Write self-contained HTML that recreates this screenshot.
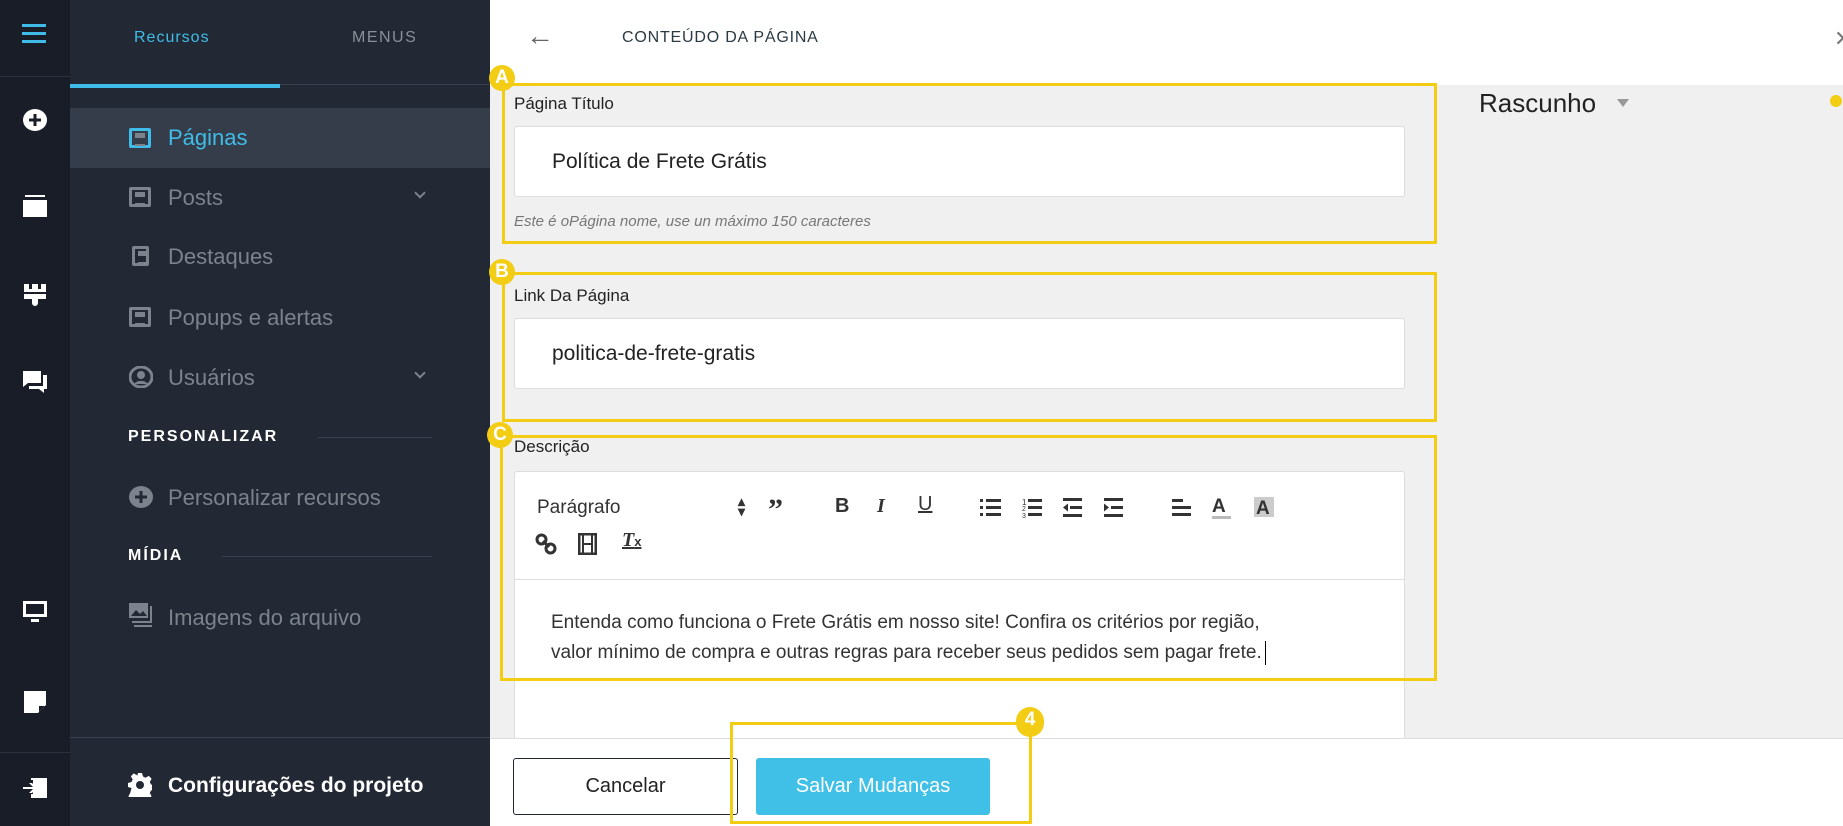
<!DOCTYPE html>
<html><head><meta charset="utf-8">
<style>
*{box-sizing:border-box;margin:0;padding:0}
body{width:1843px;height:826px;overflow:hidden;position:relative;font-family:"Liberation Sans",sans-serif;background:#f0f0f0}
.a{position:absolute}
.rail{left:0;top:0;width:70px;height:826px;background:#181d28}
.side{left:70px;top:0;width:420px;height:826px;background:#222834}
.it{position:absolute;left:168px;font-size:22px;color:#7d838c;line-height:26px}
.ic{position:absolute;left:129px;width:22px;height:20px;border:3px solid #7d838c;border-radius:2px}
.ic:after{content:"";position:absolute;left:3px;top:2px;width:10px;height:9px;border-top:2px solid #7d838c;border-bottom:2px solid #7d838c;box-shadow:inset 0 3px 0 0 #7d838c}
.ri{position:absolute;left:23px;fill:#fff}
.ybox{position:absolute;border:3px solid #f2cd14}
.badge{position:absolute;width:26px;height:26px;border-radius:50%;background:#f2cd14;color:#fff;font-weight:bold;font-size:19px;text-align:center;line-height:26px}
.lbl{position:absolute;left:514px;font-size:17px;color:#222}
.inp{position:absolute;left:514px;width:891px;background:#fff;border:1px solid #ddd;border-radius:3px;font-size:21px;color:#222;padding-left:37px}
.tb{position:absolute;font-size:20px;color:#333;font-weight:bold}
</style></head><body>
<div class="a rail"></div>
<div class="a" style="left:0;top:76px;width:70px;height:1px;background:#2c3240"></div>
<div class="a" style="left:0;top:752px;width:70px;height:1px;background:#2c3240"></div>
<div class="a" style="left:22px;top:24px;width:24px;height:3px;background:#3fbde8;box-shadow:0 8px 0 #3fbde8,0 16px 0 #3fbde8"></div>
<svg class="ri" style="top:108px" width="24" height="24" viewBox="0 0 24 24"><ellipse cx="12" cy="12" rx="12" ry="11"/><path d="M12 6v12M6 12h12" stroke="#181d28" stroke-width="3"/></svg>
<svg class="ri" style="top:195px" width="24" height="24" viewBox="0 0 24 24"><rect x="2" y="0" width="20" height="2"/><rect x="0" y="5" width="24" height="17"/></svg>
<svg class="ri" style="top:284px" width="24" height="24" viewBox="0 0 24 24"><path d="M1 0h5v5h3V0h6v5h3V0h5v8H1zM1 10h22v5h-8v4a3 3 0 0 1-6 0v-4H1z"/></svg>
<svg class="ri" style="top:370px" width="24" height="24" viewBox="0 0 24 24"><path d="M0 1h18v12H5l-5 4z M20 5h4v14h-3v4l-5-4H6v-3h14z"/></svg>
<svg class="ri" style="top:600px" width="24" height="24" viewBox="0 0 24 24"><path d="M0 1h24v16H0z M3 4v10h18V4z M8 19h8v3H8z"/></svg>
<svg class="ri" style="top:690px" width="24" height="24" viewBox="0 0 24 24"><path d="M1 1h22v14l-8 8H1z" /><path d="M16 22l6-6h-6z" fill="#181d28"/></svg>
<svg class="ri" style="top:776px" width="24" height="24" viewBox="0 0 24 24"><path d="M8 2h16v20H8v-4h2v-14h-2z M0 11h10l-4-4h3l5 5-5 5H6l4-4H0z"/></svg>

<div class="a side"></div>
<div class="a" style="left:70px;top:84px;width:420px;height:1px;background:#394050"></div>
<div class="a" style="left:70px;top:84px;width:210px;height:4px;background:#3fbde8"></div>
<div class="a" style="left:134px;top:29px;font-size:16px;color:#3fbde8;letter-spacing:1px">Recursos</div>
<div class="a" style="left:352px;top:29px;font-size:16px;color:#8a9099;letter-spacing:1.5px">MENUS</div>
<div class="a" style="left:70px;top:108px;width:420px;height:60px;background:#363d4a"></div>
<div class="ic" style="top:128px;border-color:#3fbde8"></div>
<div class="it" style="top:125px;color:#3fbde8">Páginas</div>
<div class="ic" style="top:187px"></div><div class="it" style="top:185px">Posts</div>
<div class="a" style="left:416px;top:189px;width:8px;height:8px;border-right:2px solid #7d838c;border-bottom:2px solid #7d838c;transform:rotate(45deg)"></div>
<div class="ic" style="top:246px;left:132px;width:17px"></div><div class="it" style="top:244px">Destaques</div>
<div class="ic" style="top:307px"></div><div class="it" style="top:305px">Popups e alertas</div>
<svg class="a" style="left:129px;top:366px" width="24" height="22" viewBox="0 0 24 22"><ellipse cx="12" cy="11" rx="11" ry="10" fill="none" stroke="#7d838c" stroke-width="3"/><circle cx="12" cy="9" r="4" fill="#7d838c"/><path d="M5 18a8 6 0 0 1 14 0z" fill="#7d838c"/></svg>
<div class="it" style="top:365px">Usuários</div>
<div class="a" style="left:416px;top:369px;width:8px;height:8px;border-right:2px solid #7d838c;border-bottom:2px solid #7d838c;transform:rotate(45deg)"></div>
<div class="a" style="left:128px;top:428px;font-size:16px;font-weight:bold;color:#fff;letter-spacing:2px">PERSONALIZAR</div>
<div class="a" style="left:318px;top:437px;width:114px;height:1px;background:#394050"></div>
<svg class="a" style="left:129px;top:486px" width="24" height="22" viewBox="0 0 24 22"><ellipse cx="12" cy="11" rx="12" ry="11" fill="#7d838c"/><path d="M12 5v12M6 11h12" stroke="#222834" stroke-width="3"/></svg>
<div class="it" style="top:485px">Personalizar recursos</div>
<div class="a" style="left:128px;top:547px;font-size:16px;font-weight:bold;color:#fff;letter-spacing:2px">MÍDIA</div>
<div class="a" style="left:222px;top:556px;width:210px;height:1px;background:#394050"></div>
<svg class="a" style="left:129px;top:603px" width="24" height="24" viewBox="0 0 24 24"><rect x="0" y="0" width="19" height="15" fill="#7d838c"/><path d="M2 13l5-6 4 4 3-3 4 5z" fill="#222834"/><path d="M21 3v15H3v2h20V3z M23 5v17H5v2h18" fill="#7d838c"/></svg>
<div class="it" style="top:605px">Imagens do arquivo</div>
<div class="a" style="left:70px;top:737px;width:420px;height:1px;background:#394050"></div>
<svg class="a" style="left:128px;top:773px" width="24" height="24" viewBox="0 0 24 24"><path fill="#fff" d="M10 0h4l1 3.5 2.5 1.2 3.3-1.8 2.8 2.8-1.8 3.3 1.2 2.5 3.5 1v4l-3.5 1-1.2 2.5 1.8 3.3-2.8 2.8-3.3-1.8-2.5 1.2-1 3.5h-4l-1-3.5-2.5-1.2-3.3 1.8-2.8-2.8 1.8-3.3L3.5 15 0 14v-4l3.5-1 1.2-2.5-1.8-3.3 2.8-2.8 3.3 1.8L9 3.5z"/><circle cx="12" cy="12" r="4" fill="#222834"/></svg>
<div class="it" style="top:773px;color:#fff;font-weight:bold;font-size:21px">Configurações do projeto</div>

<div class="a" style="left:490px;top:0;width:1353px;height:85px;background:#fff"></div>
<div class="a" style="left:526px;top:20px;font-size:28px;color:#666">←</div>
<div class="a" style="left:622px;top:29px;font-size:16px;color:#2a3a44;letter-spacing:.8px">CONTEÚDO DA PÁGINA</div>
<div class="a" style="left:622px;top:83px;width:250px;height:3px;background:#2a2f3a"></div>
<div class="a" style="left:1834px;top:26px;font-size:22px;color:#777">✕</div>
<div class="a" style="left:1830px;top:95px;width:12px;height:12px;border-radius:50%;background:#f2cd14"></div>
<div class="a" style="left:1479px;top:88px;font-size:26px;color:#222">Rascunho</div>
<div class="a" style="left:1617px;top:99px;border-left:6px solid transparent;border-right:6px solid transparent;border-top:8px solid #999"></div>

<div class="ybox" style="left:502px;top:83px;width:935px;height:161px"></div>
<div class="lbl" style="top:94px">Página Título</div>
<div class="inp" style="top:126px;height:71px;line-height:69px">Política de Frete Grátis</div>
<div class="a" style="left:514px;top:213px;font-size:15px;font-style:italic;color:#777">Este é oPágina nome, use un máximo 150 caracteres</div>
<div class="badge" style="left:489px;top:65px">A</div>

<div class="ybox" style="left:502px;top:272px;width:935px;height:150px"></div>
<div class="lbl" style="top:286px">Link Da Página</div>
<div class="inp" style="top:318px;height:71px;line-height:69px">politica-de-frete-gratis</div>
<div class="badge" style="left:489px;top:259px">B</div>

<div class="a" style="left:514px;top:471px;width:891px;height:290px;background:#fff;border:1px solid #ddd;border-radius:3px"></div>
<div class="a" style="left:515px;top:579px;width:889px;height:1px;background:#ddd"></div>
<div class="a" style="left:537px;top:497px;font-size:19px;color:#333">Parágrafo</div>
<div class="tb" style="left:738px;top:496px;font-size:14px;line-height:10px">▴<br>▾</div>
<div class="tb" style="left:768px;top:493px;font-size:30px;font-family:'Liberation Serif',serif">”</div>
<div class="tb" style="left:835px;top:495px">B</div>
<div class="tb" style="left:877px;top:495px;font-family:'Liberation Serif',serif;font-style:italic">I</div>
<div class="tb" style="left:918px;top:493px;text-decoration:underline;font-weight:normal">U</div>
<svg class="a" style="left:980px;top:497px" width="145" height="22" viewBox="0 0 145 22" fill="#333"><rect x="0" y="2" width="3" height="3"/><rect x="6" y="2" width="15" height="3"/><rect x="0" y="9" width="3" height="3"/><rect x="6" y="9" width="15" height="3"/><rect x="0" y="16" width="3" height="3"/><rect x="6" y="16" width="15" height="3"/>
<text x="42" y="8" font-size="8" font-family="Liberation Sans">1</text><text x="42" y="14" font-size="7">2</text><text x="42" y="21" font-size="7">3</text><rect x="48" y="2" width="14" height="3"/><rect x="48" y="9" width="14" height="3"/><rect x="48" y="16" width="14" height="3"/>
<rect x="83" y="1" width="19" height="3"/><rect x="90" y="9" width="12" height="3"/><rect x="83" y="17" width="19" height="3"/><path d="M83 10.5l5-4v8z"/>
<rect x="124" y="1" width="19" height="3"/><rect x="131" y="9" width="12" height="3"/><rect x="124" y="17" width="19" height="3"/><path d="M129 10.5l-5-4v8z"/></svg>
<svg class="a" style="left:1170px;top:495px" width="110" height="26" viewBox="0 0 110 26" fill="#333"><rect x="2" y="4" width="11" height="3"/><rect x="2" y="11" width="19" height="3"/><rect x="2" y="18" width="19" height="3"/>
<text x="42" y="17" font-size="19" font-weight="bold" font-family="Liberation Sans">A</text><rect x="42" y="21" width="19" height="3" fill="#bbb"/>
<rect x="84" y="2" width="20" height="20" fill="#ccc"/><text x="86" y="19" font-size="19" font-weight="bold" font-family="Liberation Sans">A</text></svg>
<svg class="a" style="left:535px;top:533px" width="22" height="22" viewBox="0 0 22 22" fill="none" stroke="#333" stroke-width="3"><rect x="2" y="2" width="9" height="9" rx="4.5"/><rect x="11" y="11" width="9" height="9" rx="4.5"/><path d="M8 8l6 6"/></svg>
<svg class="a" style="left:578px;top:533px" width="19" height="22" viewBox="0 0 19 22"><rect x="1" y="1" width="17" height="20" fill="none" stroke="#333" stroke-width="3"/><rect x="5" y="1" width="9" height="20" fill="none" stroke="#333" stroke-width="2"/><rect x="5" y="10" width="9" height="2" fill="#333"/></svg>
<div class="tb" style="left:622px;top:529px;font-family:'Liberation Serif',serif;font-style:italic;text-decoration:underline">T<span style="font-size:13px;font-style:normal;font-family:'Liberation Sans'">x</span></div>
<div class="a" style="left:551px;top:608px;font-size:19px;line-height:30px;color:#333">Entenda como funciona o Frete Grátis em nosso site! Confira os critérios por região,<br>valor mínimo de compra e outras regras para receber seus pedidos sem pagar frete.<span style="display:inline-block;width:1px;height:24px;background:#000;vertical-align:middle;margin-left:3px"></span></div>
<div class="ybox" style="left:500px;top:435px;width:937px;height:246px"></div>
<div class="lbl" style="top:437px;left:514px">Descrição</div>
<div class="badge" style="left:487px;top:422px">C</div>

<div class="a" style="left:490px;top:738px;width:1353px;height:88px;background:#fff;border-top:1px solid #ddd"></div>
<div class="a" style="left:513px;top:758px;width:225px;height:57px;border:1px solid #222834;border-radius:3px;font-size:20px;color:#222;text-align:center;line-height:55px">Cancelar</div>
<div class="a" style="left:756px;top:758px;width:234px;height:57px;background:#40bfe7;border-radius:3px;font-size:20px;color:#fff;text-align:center;line-height:57px">Salvar Mudanças</div>
<div class="ybox" style="left:730px;top:722px;width:302px;height:102px"></div>
<div class="badge" style="left:1016px;top:707px;width:28px;height:30px;border-radius:14px">4</div>
</body></html>
